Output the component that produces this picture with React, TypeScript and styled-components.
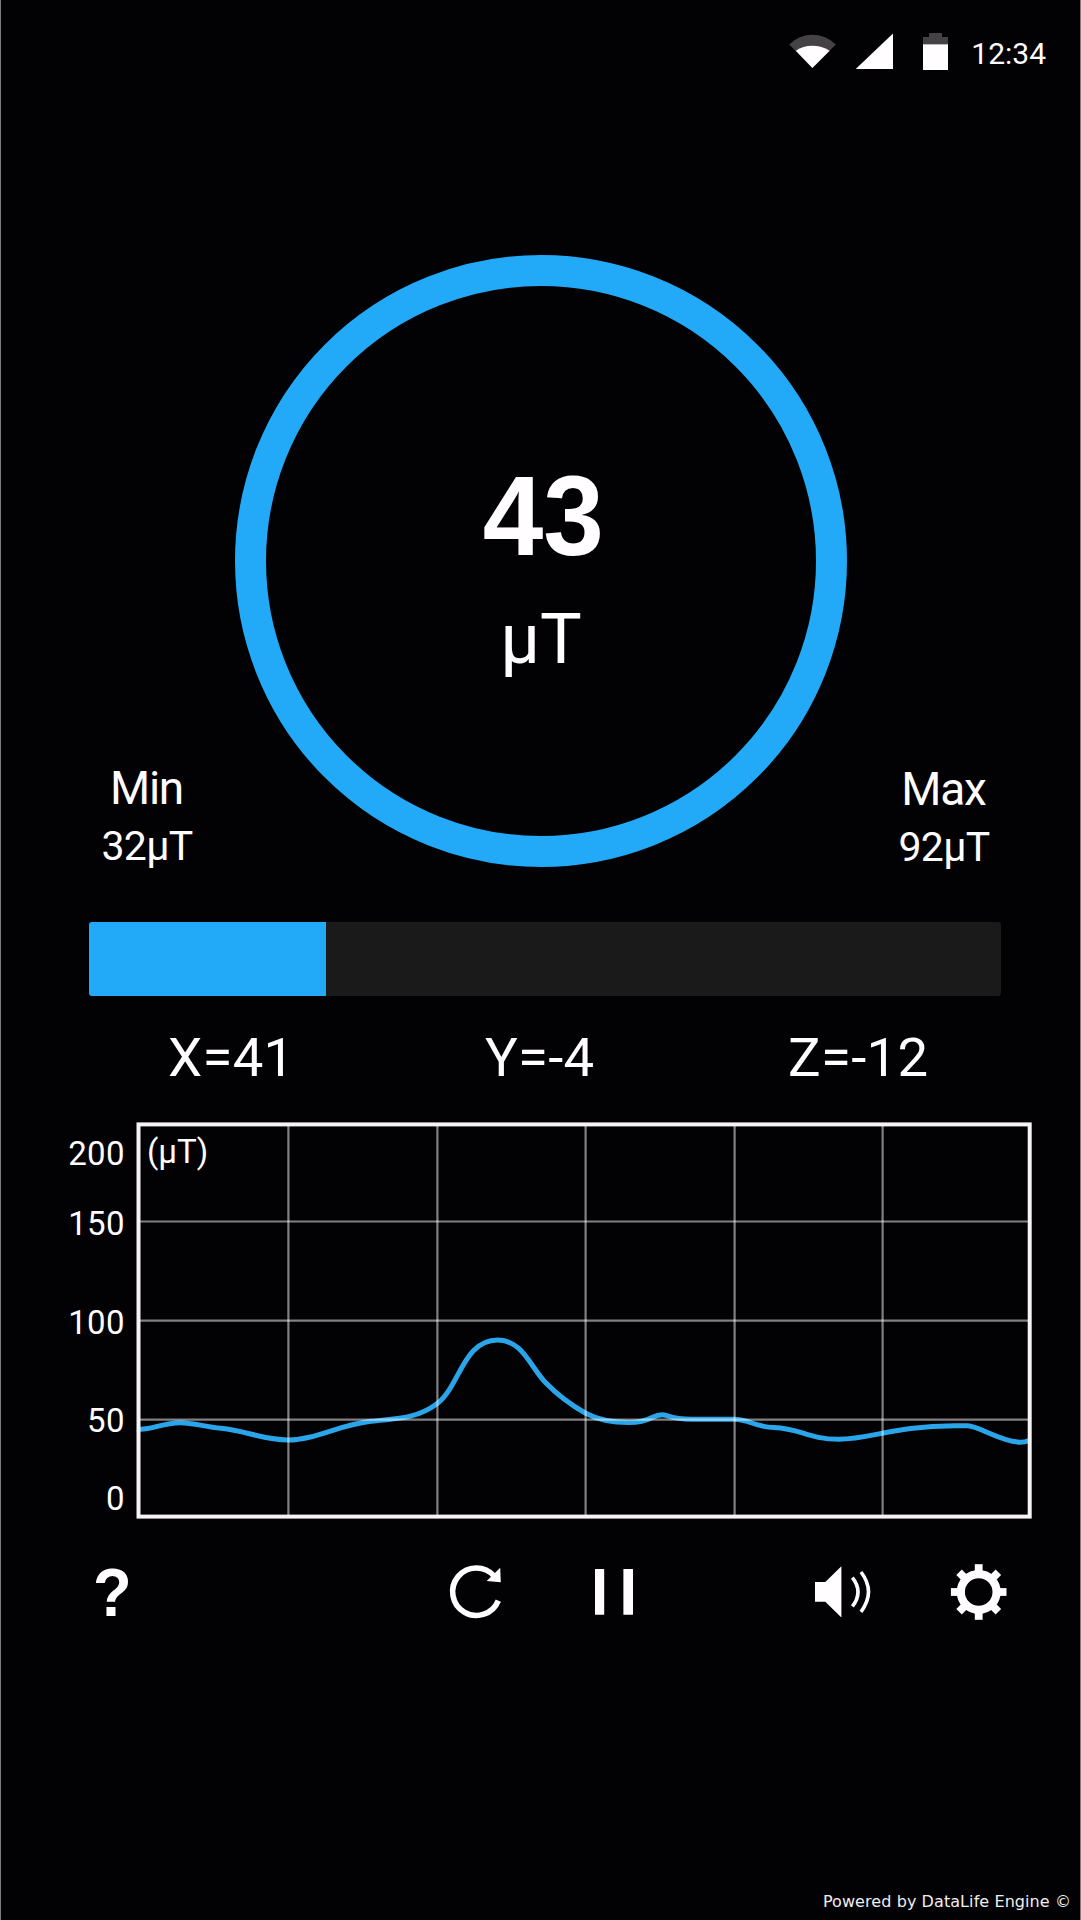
import React from 'react';
import styled, { createGlobalStyle } from 'styled-components';

const BLUE = '#22a9f7';

const GlobalStyle = createGlobalStyle`
  * { box-sizing: border-box; }
  html, body { margin: 0; padding: 0; background: #020103; }
`;

const Screen = styled.main`
  width: 1081px;
  height: 1920px;
  display: flex;
  flex-direction: column;
  overflow: hidden;
  background: #020103;
  border-left: 1px solid #7d7c7e;
  border-right: 1px solid #7d7c7e;
  color: #fffdff;
  font-family: Roboto, 'Liberation Sans', sans-serif;
`;

const StatusBar = styled.header`
  height: 255px;
  flex: none;
  padding: 33px 34px 0 0;
  display: flex;
  justify-content: flex-end;
  align-items: flex-start;
`;

const StatusIcons = styled.svg`
  width: 160px;
  height: 37px;
  margin-right: 22px;
`;

const Clock = styled.span`
  font-size: 30px;
  line-height: 42px;
`;

const Hero = styled.section`
  height: 612px;
  flex: none;
  display: grid;
  grid-template-columns: 234px 612px 1fr;
`;

const Ring = styled.div`
  width: 612px;
  height: 612px;
  border: 31px solid ${BLUE};
  border-radius: 50%;
  display: flex;
  flex-direction: column;
  align-items: center;
  padding-top: 165px;
`;

const Reading = styled.div`
  font: bold 114px/130px 'Liberation Sans', Arial, sans-serif;
  padding-left: 5px;
  transform: scaleX(0.955);
`;

const Unit = styled.div`
  font-size: 70px;
  line-height: 80px;
  margin-top: 18px;
`;

const Extreme = styled.div<{ $left: number; $drop: number }>`
  width: 120px;
  margin-left: ${(p) => p.$left}px;
  padding-top: ${(p) => 505 + p.$drop}px;
  text-align: center;
`;

const ExtremeName = styled.div`
  font: 46px/56px Roboto, sans-serif;
  letter-spacing: -1.2px;
  margin-left: -1px;
`;

const ExtremeValue = styled.div`
  font-size: 41px;
  line-height: 60px;
  letter-spacing: -0.7px;
`;

const Track = styled.div`
  width: 912px;
  height: 74px;
  flex: none;
  margin: 55px 0 0 88px;
  border-radius: 3px;
  background: #1b1a1b;
  overflow: hidden;
`;

const Fill = styled.div`
  height: 100%;
  background: ${BLUE};
`;

const Axes = styled.section`
  height: 126px;
  flex: none;
  padding-top: 27px;
  display: grid;
  grid-template-columns: 167px 317px 303px 1fr;
  font-size: 54.5px;
  line-height: 68px;
  letter-spacing: 0.3px;
`;

const Axis = styled.span`
  white-space: nowrap;
`;

const ChartRow = styled.section`
  height: 397px;
  flex: none;
  display: flex;
`;

const Scale = styled.div`
  width: 124px;
  margin-right: 11px;
  padding-top: 12px;
  display: grid;
  grid-template-rows: 70px 99px 98px 78px 40px;
  text-align: right;
  font-size: 33px;
  line-height: 40px;
  letter-spacing: 0.4px;
`;

const Plot = styled.div`
  position: relative;
  width: 896px;
  height: 397px;
`;

const PlotSvg = styled.svg`
  display: block;
`;

const PlotUnit = styled.span`
  position: absolute;
  left: 11px;
  top: 10px;
  font-size: 33px;
  line-height: 40px;
`;

const Toolbar = styled.nav`
  height: 60px;
  flex: none;
  margin: 43px 0 0 92px;
  display: grid;
  grid-template-columns: 353px 146px 219px 135px 60px;
`;

const Tool = styled.button`
  width: 60px;
  height: 60px;
  padding: 0;
  border: 0;
  background: none;
  color: inherit;
  display: block;
  text-align: left;
`;

const HelpMark = styled.span`
  display: block;
  font: bold 68px/59px 'Liberation Sans', Arial, sans-serif;
  transform: scaleX(0.93);
  transform-origin: left;
`;

const Footer = styled.footer`
  margin-top: auto;
  padding: 0 9px 8px 0;
  text-align: right;
  font: 16px/20px 'DejaVu Sans', sans-serif;
  letter-spacing: 0.08px;
  color: #f0eef0;
`;

const FIELD_CURVE = [
  'M137 1429C150 1431 162 1422.7 180 1422.7',
  'C194 1422.7 205 1427 221 1428.3',
  'C246 1430.5 262 1440 288.3 1440',
  'C315 1440 340 1424.5 371 1421.3',
  'C400 1418.5 418 1418 437.3 1403.5',
  'C460 1386 463 1340 497.8 1340',
  'C522 1340 530 1366 545 1382',
  'C556 1393.5 571 1405 585.7 1413.3',
  'C600 1421 616 1422.5 629 1422.5',
  'C652 1422.5 651 1414.7 662 1414.7',
  'C668 1414.7 670 1419.3 692 1419.3',
  'L734 1419.3',
  'C750 1419.3 754 1427 774 1427.5',
  'C801 1428.5 808 1439.3 839 1439.3',
  'C870 1439.3 895 1425.7 955 1425.7',
  'L968 1425.8',
  'C978 1425.8 1002 1442.2 1020 1442.2',
  'Q1025 1442.2 1029 1440.5',
].join('');

const COLUMNS = [288.4, 437.4, 585.6, 734.6, 882.6];
const ROWS = [1221.5, 1320.6, 1419.6];

function Chart() {
  return (
    <PlotSvg width="896" height="397" viewBox="136 1122 896 397">
      <path d={FIELD_CURVE} fill="none" stroke="#2ba5ea" strokeWidth="5" />
      <g stroke="#fff" strokeOpacity="0.5" strokeWidth="2.2">
        {COLUMNS.map((x) => <line key={x} x1={x} x2={x} y1="1126" y2="1515" />)}
        {ROWS.map((y) => <line key={y} x1="140" x2="1028" y1={y} y2={y} />)}
      </g>
      <rect x="138.5" y="1124.4" width="891.2" height="392.2" fill="none" stroke="#f6f2f6" strokeWidth="4" />
    </PlotSvg>
  );
}

const TEETH = [0, 45, 90, 135, 180, 225, 270, 315];

export default function App() {
  const level = 237 / 912;
  return (
    <>
      <GlobalStyle />
      <Screen>
        <StatusBar>
          <StatusIcons viewBox="789 33 160 37">
            <path d="M812.4 68L789.2 44.4Q799 34.7 812.4 34.7T835.8 44.4Z" fill="#444245" />
            <path d="M812.4 68L795.8 50.8Q803 45.8 812.4 45.8T829.6 50.8Z" fill="#fffdff" />
            <path d="M855.7 69L893 33.6V69Z" fill="#fffdff" />
            <path d="M923 44.5V37H929V33H942V37H948V44.5Z" fill="#444245" />
            <path d="M923 44.3H948V70H923Z" fill="#fffdff" />
          </StatusIcons>
          <Clock>12:34</Clock>
        </StatusBar>

        <Hero>
          <Extreme $left={86} $drop={0}>
            <ExtremeName>Min</ExtremeName>
            <ExtremeValue>32µT</ExtremeValue>
          </Extreme>
          <Ring>
            <Reading>43</Reading>
            <Unit>µT</Unit>
          </Ring>
          <Extreme $left={37} $drop={1}>
            <ExtremeName>Max</ExtremeName>
            <ExtremeValue>92µT</ExtremeValue>
          </Extreme>
        </Hero>

        <Track>
          <Fill style={{ width: `${level * 100}%` }} />
        </Track>

        <Axes>
          <span />
          <Axis>X=41</Axis>
          <Axis>Y=-4</Axis>
          <Axis>Z=-12</Axis>
        </Axes>

        <ChartRow>
          <Scale>
            <span>200</span>
            <span>150</span>
            <span>100</span>
            <span>50</span>
            <span>0</span>
          </Scale>
          <Plot>
            <Chart />
            <PlotUnit>(µT)</PlotUnit>
          </Plot>
        </ChartRow>

        <Toolbar>
          <Tool>
            <HelpMark>?</HelpMark>
          </Tool>
          <Tool aria-label="Reset">
            <svg width="60" height="60" viewBox="446 1562.6 60 60">
              <path d="M498.3 1601.2A23.7 23.7 0 1 1 494 1576.5" fill="none" stroke="#fffdff" strokeWidth="5.6" />
              <path d="M500.2 1568.4L500.8 1582.8L486.7 1581.6Z" fill="#fffdff" />
            </svg>
          </Tool>
          <Tool aria-label="Pause">
            <svg width="60" height="60" viewBox="592 1562 60 60">
              <path d="M595 1569H604.2V1614.7H595ZM623.4 1569H633V1614.7H623.4Z" fill="#fffdff" />
            </svg>
          </Tool>
          <Tool aria-label="Sound">
            <svg width="60" height="60" viewBox="811 1562 60 60">
              <path d="M815 1582H825.3L841.4 1566.3V1617.6L825.3 1601.7H815Z" fill="#fffdff" />
              <path d="M852.4 1577.6Q863.6 1591.8 852.4 1606.4M861 1572Q876 1591.8 861 1611.8" fill="none" stroke="#fffdff" strokeWidth="3.6" />
            </svg>
          </Tool>
          <Tool aria-label="Settings">
            <svg width="66" height="60" viewBox="946 1562 66 60">
              <circle cx="978.7" cy="1592" r="17.9" fill="none" stroke="#fffdff" strokeWidth="8.2" />
              {TEETH.map((a) => (
                <rect key={a} x="974.8" y="1564.2" width="7.8" height="8" fill="#fffdff" transform={`rotate(${a} 978.7 1592)`} />
              ))}
            </svg>
          </Tool>
        </Toolbar>

        <Footer>Powered by DataLife Engine ©</Footer>
      </Screen>
    </>
  );
}
